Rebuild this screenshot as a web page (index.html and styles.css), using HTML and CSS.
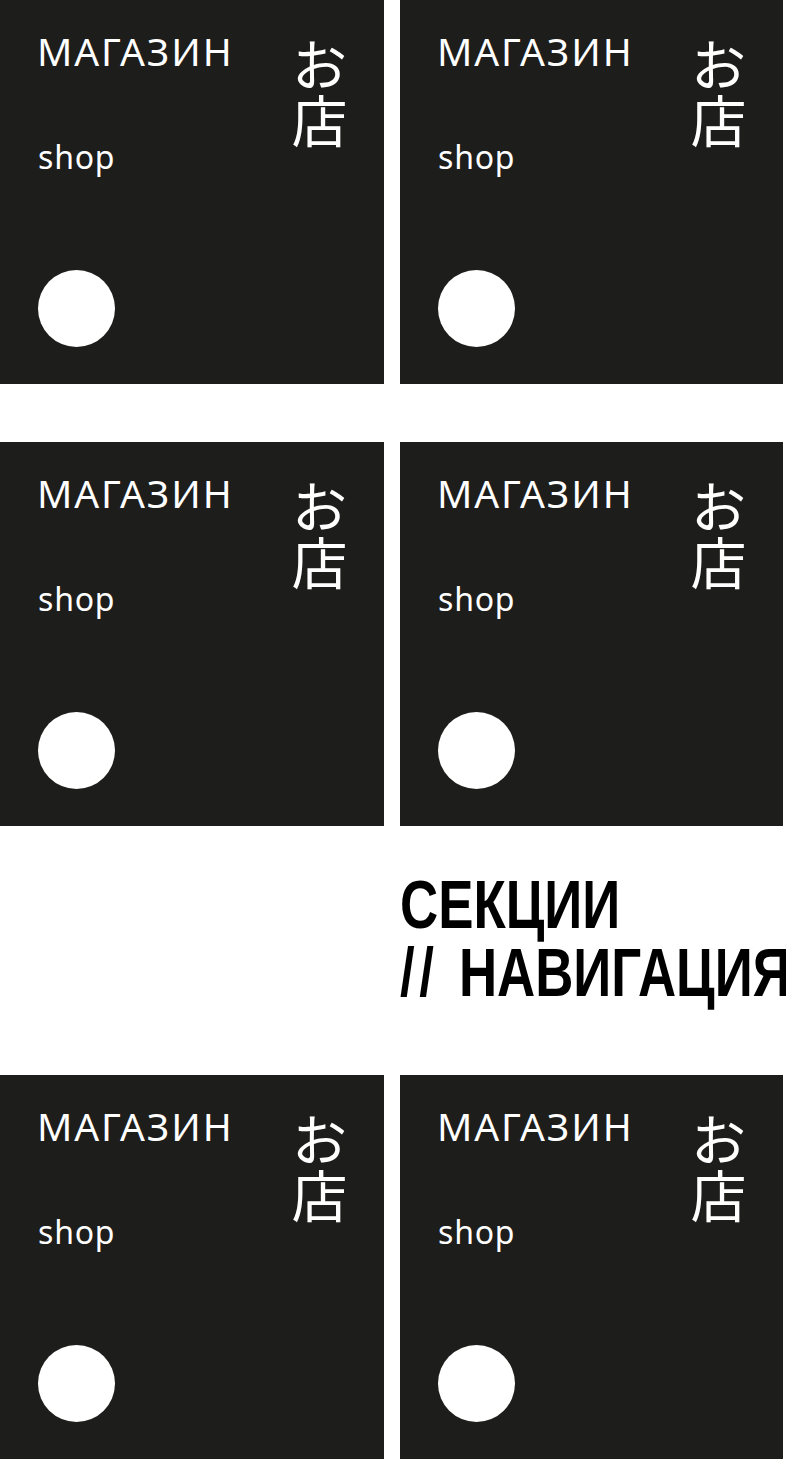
FILE: index.html
```html
<!DOCTYPE html>
<html lang="ru">
<head>
<meta charset="utf-8">
<title>Секции // Навигация</title>
<link rel="stylesheet" href="styles.css">
</head>
<body>
<main class="page">
  <div class="row">
    <a class="card" href="#"><div class="card-text"><span class="title">МАГАЗИН</span><span class="sub">shop</span></div><span class="jp" lang="ja">お店</span><span class="dot"></span></a>
    <a class="card" href="#"><div class="card-text"><span class="title">МАГАЗИН</span><span class="sub">shop</span></div><span class="jp" lang="ja">お店</span><span class="dot"></span></a>
  </div>
  <div class="row">
    <a class="card" href="#"><div class="card-text"><span class="title">МАГАЗИН</span><span class="sub">shop</span></div><span class="jp" lang="ja">お店</span><span class="dot"></span></a>
    <a class="card" href="#"><div class="card-text"><span class="title">МАГАЗИН</span><span class="sub">shop</span></div><span class="jp" lang="ja">お店</span><span class="dot"></span></a>
  </div>
  <div class="heading-row">
    <div class="spacer"></div>
    <h1 class="heading"><span class="heading-inner">СЕКЦИИ<br><span class="slashes">//</span>НАВИГАЦИЯ</span></h1>
  </div>
  <div class="row">
    <a class="card" href="#"><div class="card-text"><span class="title">МАГАЗИН</span><span class="sub">shop</span></div><span class="jp" lang="ja">お店</span><span class="dot"></span></a>
    <a class="card" href="#"><div class="card-text"><span class="title">МАГАЗИН</span><span class="sub">shop</span></div><span class="jp" lang="ja">お店</span><span class="dot"></span></a>
  </div>
</main>
</body>
</html>
```

FILE: styles.css
```css
html, body {
  margin: 0;
  padding: 0;
  background: #ffffff;
}
body {
  width: 786px;
  overflow: hidden;
  font-family: "Noto Sans", "Liberation Sans", sans-serif;
}
.page {
  display: flex;
  flex-direction: column;
}
.row {
  display: grid;
  grid-template-columns: 384px 383px;
  column-gap: 16px;
  margin-bottom: 58px;
}
.row:last-child {
  margin-bottom: 0;
}
.card {
  position: relative;
  display: grid;
  grid-template-columns: 1fr auto;
  grid-template-rows: auto 1fr auto;
  height: 384px;
  box-sizing: border-box;
  padding: 31px 37px 37px 38px;
  background: #1d1d1b;
  color: #ffffff;
  text-decoration: none;
}
.card-text {
  display: flex;
  flex-direction: column;
  grid-column: 1;
  grid-row: 1;
}
.title {
  font-size: 39px;
  line-height: 40px;
  font-weight: 400;
  letter-spacing: 1.9px;
  margin-left: -1px;
}
.sub {
  font-size: 32px;
  line-height: 32px;
  letter-spacing: 0.8px;
  margin-top: 70px;
}
.jp {
  grid-column: 2;
  grid-row: 1 / 3;
  writing-mode: vertical-rl;
  font-family: "Noto Sans CJK JP", sans-serif;
  font-weight: 400;
  font-size: 56px;
  line-height: 56px;
  margin-top: 6px;
  align-self: start;
}
.dot {
  grid-column: 1;
  grid-row: 3;
  width: 77px;
  height: 77px;
  border-radius: 50%;
  background: #ffffff;
}
.heading-row {
  display: grid;
  grid-template-columns: 384px 402px;
  column-gap: 16px;
  padding-top: 44px;
  height: 249px;
  box-sizing: border-box;
  margin-top: -58px;
}
.heading {
  margin: 0;
  font-family: "Liberation Sans", "Arial", sans-serif;
  font-weight: 700;
  font-size: 68px;
  line-height: 68px;
  color: #000000;
  white-space: nowrap;
}
.heading-inner {
  display: inline-block;
  transform: scaleX(0.777);
  transform-origin: left top;
}
.slashes {
  letter-spacing: 6px;
  margin-right: 26px;
}
```
